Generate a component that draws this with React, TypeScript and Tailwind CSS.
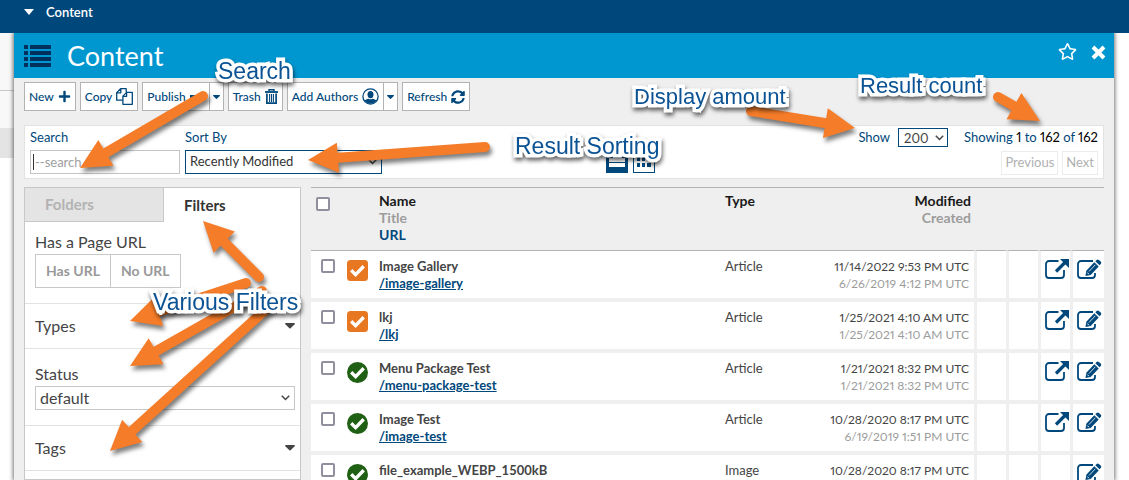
import React, { useState } from "react";
import { FaPlus, FaRegStar, FaSyncAlt } from "react-icons/fa";
import clsx from "clsx";

type Row = {
  name: string;
  url?: string;
  type: string;
  modified: string;
  created: string;
  status: "draft" | "live";
  external: boolean;
};

const rows: Row[] = [
  { name: "Image Gallery", url: "/image-gallery", type: "Article", modified: "11/14/2022 9:53 PM UTC", created: "6/26/2019 4:12 PM UTC", status: "draft", external: true },
  { name: "lkj", url: "/lkj", type: "Article", modified: "1/25/2021 4:10 AM UTC", created: "1/25/2021 4:10 AM UTC", status: "draft", external: true },
  { name: "Menu Package Test", url: "/menu-package-test", type: "Article", modified: "1/21/2021 8:32 PM UTC", created: "1/21/2021 8:32 PM UTC", status: "live", external: true },
  { name: "Image Test", url: "/image-test", type: "Article", modified: "10/28/2020 8:17 PM UTC", created: "6/19/2019 1:51 PM UTC", status: "live", external: true },
  { name: "file_example_WEBP_1500kB", type: "Image", modified: "10/28/2020 8:17 PM UTC", created: "", status: "live", external: false },
];

function ListIcon() {
  return (
    <svg width="27" height="22" viewBox="0 0 27 22" fill="#00305c" aria-hidden="true">
      {[0, 6, 12, 18].map((y) => (
        <g key={y}>
          <rect x="0" y={y} width="4" height="4" />
          <rect x="6" y={y} width="21" height="4" />
        </g>
      ))}
    </svg>
  );
}

function CaretDown({ width }: { width: number }) {
  return (
    <svg width={width} height={width / 2 + 0.5} viewBox="0 0 10 5.500" fill="currentColor" aria-hidden="true">
      <path d="M.8 0h8.400c.7 0 1 .7.5 1.200L5.600 5.200a.8.8 0 0 1-1.200 0L.3 1.200C-.2.7.1 0 .8 0Z" />
    </svg>
  );
}

function CopyIcon() {
  return (
    <svg width="17" height="17" viewBox="0 0 17 17" fill="none" stroke="currentColor" strokeWidth="1.300" strokeLinejoin="round" aria-hidden="true">
      <path d="M6.8 12.2H.7V4.6L4.6.7h5.6v3.6M4.8.9v3.9H.9" />
      <path d="M10.6 4.4h5.7v11.9H6.9V8.1l3.7-3.7v3.9H7.1" />
    </svg>
  );
}

function TrashIcon() {
  return (
    <svg width="13" height="15" viewBox="0 0 13 15" fill="none" stroke="currentColor" aria-hidden="true">
      <path d="M0 3h13" strokeWidth="1.8" />
      <path d="M4 2.6V.8h5v1.8" strokeWidth="1.4" />
      <path d="M1.9 4.5v9.6h9.2V4.5" strokeWidth="1.7" />
      <path d="M4.6 5v8M6.5 5v8M8.4 5v8" strokeWidth="1.1" />
    </svg>
  );
}

function UserIcon() {
  return (
    <svg width="17" height="17" viewBox="0 0 17 17" aria-hidden="true">
      <circle cx="8.5" cy="8.5" r="7.6" fill="none" stroke="currentColor" strokeWidth="1.3" />
      <ellipse cx="8.5" cy="6.6" rx="3" ry="3.7" fill="currentColor" />
      <path d="M2.400 12.600c.9-1.200 2.600-1.500 4.400-1.900.9.7 2.500.7 3.400 0 1.800.4 3.500.7 4.400 1.900A7.600 7.600 0 0 1 2.400 12.600Z" fill="currentColor" />
    </svg>
  );
}

function ExternalIcon() {
  return (
    <svg width="26" height="24" viewBox="0 0 26 24" aria-hidden="true">
      <path d="M14.500 4H5a3 3 0 0 0-3 3v11a3 3 0 0 0 3 3h12a3 3 0 0 0 3-3v-5" fill="none" stroke="currentColor" strokeWidth="1.800" />
      <path d="M12 14.500 21 5.500" stroke="currentColor" strokeWidth="3.200" />
      <path d="M16 2h9v9Z" fill="currentColor" />
    </svg>
  );
}

function EditIcon() {
  return (
    <svg width="26" height="24" viewBox="0 0 26 24" aria-hidden="true">
      <path d="M17 4H5a3 3 0 0 0-3 3v11a3 3 0 0 0 3 3h11a3 3 0 0 0 3-3v-2" fill="none" stroke="currentColor" strokeWidth="1.800" />
      <path d="M9.500 19 10.300 13.800 18.300 5.300 22.700 9.400 14.700 18Z" fill="currentColor" />
      <path d="M13 14.500 19.300 7.800" stroke="#fff" strokeWidth="0.800" />
      <path d="M11.300 15.600 12.900 17.200" stroke="#fff" strokeWidth="1" />
      <path d="M19.300 4.300 20.600 2.900c.7-.7 1.600-.7 2.300 0l1.800 1.700c.7.7.7 1.600.100 2.300L23.500 8.300Z" fill="currentColor" />
    </svg>
  );
}

function StatusIcon({ status }: { status: Row["status"] }) {
  return (
    <svg width="21" height="21" viewBox="0 0 21 21" role="img" aria-label={status === "draft" ? "Draft" : "Published"}>
      {status === "draft" ? <rect width="21" height="21" rx="3.500" fill="#e87722" /> : <circle cx="10.500" cy="10.500" r="10.500" fill="#206014" />}
      <path d="m4.200 10.300 4.400 4.300 8.100-8.300" fill="none" stroke="#fff" strokeWidth="3.400" />
    </svg>
  );
}

function Chevron({ className }: { className: string }) {
  return (
    <svg className={clsx("pointer-events-none absolute", className)} width="9" height="6" viewBox="0 0 9 6" fill="none" stroke="#444" strokeWidth="1.500" aria-hidden="true">
      <path d="m.8.8 3.700 3.700L8.200.8" />
    </svg>
  );
}

const toolBtn = "flex h-[29px] items-center gap-1 border border-[#b3b3b3] bg-white px-1 text-xs font-medium text-[#00487c]";

function ToolButton({ label, icon, menu }: { label: string; icon: React.ReactNode; menu?: boolean }) {
  return (
    <div className="flex">
      <button type="button" className={toolBtn}>
        {label}
        {icon}
      </button>
      {menu && (
        <button type="button" aria-label={`${label} options`} className="-ml-px flex h-[29px] w-[15px] items-center justify-center border border-[#b3b3b3] bg-white text-[#00487c]">
          <CaretDown width={7} />
        </button>
      )}
    </div>
  );
}

function PanelHeader() {
  return (
    <header className="flex h-[45px] shrink-0 items-center bg-[#0097d1] pr-2 pl-2.5 text-white">
      <ListIcon />
      <h1 className="ml-4 text-[27px] leading-8">Content</h1>
      <button type="button" aria-label="Favorite" className="ml-auto -mt-2">
        <FaRegStar size={19} />
      </button>
      <button type="button" aria-label="Close" className="ml-3.5 -mt-1.5">
        <svg width="15" height="15" viewBox="0 0 15 15" stroke="#fff" strokeWidth="4" aria-hidden="true">
          <path d="m2 2 11 11M13 2 2 13" />
        </svg>
      </button>
    </header>
  );
}

function QueryBar() {
  return (
    <section className="mt-3.5 flex h-[54px] border border-[#e2e2e2] bg-white pl-[5px] text-[13px] text-[#00487c]">
      <div className="flex w-[150px] flex-col">
        <label htmlFor="q" className="flex h-6 items-center">Search</label>
        <div className="relative">
          <input id="q" placeholder="--search" className="block h-6 w-full border border-[#c4c4c4] bg-white px-1 placeholder:text-[#a0a0a0]" />
          <span className="absolute top-1 left-[3px] h-4 w-px bg-[#333]" aria-hidden="true" />
        </div>
      </div>
      <div className="ml-[5px] flex w-[197px] flex-col">
        <label htmlFor="sort" className="flex h-6 items-center">Sort By</label>
        <div className="relative">
          <select id="sort" className="block h-6 w-full appearance-none border border-[#00487c] bg-white px-1 text-[#333]">
            <option>Recently Modified</option>
          </select>
          <Chevron className="top-[9px] right-[5px]" />
        </div>
      </div>
      <div className="mx-auto flex items-end gap-[5px] pb-[5px] pl-5">
        <button type="button" aria-label="List view" className="flex h-[22px] w-[22px] flex-col justify-end gap-px bg-[#00487c] px-[3px] pb-1.5">
          <span className="h-1 w-full bg-white" />
          <span className="h-1 w-full bg-white" />
          <span className="h-1 w-full bg-white" />
        </button>
        <button type="button" aria-label="Grid view" className="grid h-[22px] w-[22px] grid-cols-3 content-end gap-0.5 border border-[#00487c] px-[3px] pb-[5px]">
          {[0, 1, 2, 3, 4, 5].map((i) => (
            <span key={i} className="h-1 bg-[#00487c]" />
          ))}
        </button>
      </div>
      <div className="flex flex-col items-end pr-[5px] proportional-nums">
        <div className="flex items-center pt-0.5">
          <label htmlFor="show">Show</label>
          <div className="relative ml-2">
            <select id="show" className="block h-[19px] w-[50px] appearance-none border border-[#00487c] bg-white px-[5px] text-[13px] leading-4 text-[#444]">
              <option>200</option>
            </select>
            <Chevron className="top-[7px] right-1" />
          </div>
          <p className="ml-4">
            Showing <span className="text-black">1</span> to <span className="text-black">162</span> of <span className="text-black">162</span>
          </p>
        </div>
        <div className="mt-[3px] flex gap-1 text-[#b0b0b0]">
          <button type="button" className="h-6 border border-[#ececec] px-[3px]">Previous</button>
          <button type="button" className="h-6 border border-[#ececec] px-[3px]">Next</button>
        </div>
      </div>
    </section>
  );
}

function Sidebar() {
  const [tab, setTab] = useState("Filters");
  return (
    <aside className="w-[277px] shrink-0 border border-[#c8c8c8] bg-white text-base text-[#444]">
      <div className="grid h-[34px] grid-cols-[139px_1fr] text-[15px] font-bold">
        {["Folders", "Filters"].map((t) => (
          <button
            key={t}
            type="button"
            onClick={() => setTab(t)}
            className={clsx("pl-5 text-left", tab === t ? "text-[#333]" : "border-r border-b border-[#c8c8c8] bg-[#e4e4e4] text-[#b3b3b3]")}
          >
            {t}
          </button>
        ))}
      </div>
      <section className="h-[82px] border-b border-[#e2e2e2] px-2.5 pt-2">
        <h2 className="leading-6">Has a Page URL</h2>
        <div className="flex text-sm font-bold text-[#999]">
          <button type="button" className="h-[34px] border border-[#c8c8c8] px-2.5">Has URL</button>
          <button type="button" className="-ml-px h-[34px] border border-[#c8c8c8] px-2.5">No URL</button>
        </div>
      </section>
      <button type="button" className="flex h-[45px] w-full items-center justify-between border-b border-[#e2e2e2] pr-[5px] pl-2.5">
        Types <CaretDown width={10} />
      </button>
      <section className="h-[77px] border-b border-[#e2e2e2] pr-[5px] pl-2.5 pt-[13px]">
        <label htmlFor="status" className="block leading-6">Status</label>
        <div className="relative">
          <select id="status" className="block h-6 w-full appearance-none border border-[#c8c8c8] bg-white px-1 leading-5">
            <option>default</option>
          </select>
          <Chevron className="top-[9px] right-[5px]" />
        </div>
      </section>
      <button type="button" className="flex h-[45px] w-full items-center justify-between border-b border-[#e2e2e2] pr-[5px] pl-2.5">
        Tags <CaretDown width={10} />
      </button>
    </aside>
  );
}

const box = "block size-3.5 appearance-none rounded-xs border-2 border-[#8f8f9d] bg-white";
const cell = "h-[51px] border-b-4 border-b-[#efefef] bg-white p-0 align-top group-first:h-[52px] group-first:border-t group-first:border-t-[#b3b3b3]";
const action = "border-l-3 border-l-[#efefef] pt-1.5 pl-[3px] text-[#00487c]";
const head = "h-[63px] border-t border-[#b3b3b3] p-0 pt-1 align-top text-sm font-bold leading-[17px] text-[#1a1a1a]";

function ResultsTable() {
  return (
    <table className="min-w-0 flex-1 table-fixed border-separate border-spacing-0 self-start text-[13px] text-[#444]">
      <colgroup>
        <col className="w-[34px]" />
        <col className="w-[34px]" />
        <col />
        <col className="w-[90px]" />
        <col className="w-[159px]" />
        <col className="w-8" />
        <col className="w-8" />
        <col className="w-8" />
        <col className="w-[34px]" />
      </colgroup>
      <thead>
        <tr>
          <th className={head}>
            <input type="checkbox" aria-label="Select all" className={clsx(box, "mt-[5px] ml-[5px]")} />
          </th>
          <th className={head} />
          <th className={clsx(head, "text-left")}>
            Name
            <div className="text-[#9c9c9c]">Title</div>
            <div className="text-[#00487c]">URL</div>
          </th>
          <th className={clsx(head, "text-left")}>Type</th>
          <th className={clsx(head, "pr-[3px] text-right")}>
            Modified
            <div className="text-[#9c9c9c]">Created</div>
          </th>
          <th className={head} />
          <th className={head} />
          <th className={head} />
          <th className={head} />
        </tr>
      </thead>
      <tbody>
        {rows.map((r) => (
          <tr key={r.name} className="group">
            <td className={cell}>
              <input type="checkbox" aria-label={`Select ${r.name}`} className={clsx(box, "mt-2 ml-2.5")} />
            </td>
            <td className={cell}>
              <div className="pt-[9px] pl-0.5">
                <StatusIcon status={r.status} />
              </div>
            </td>
            <td className={clsx(cell, "pt-[7px] font-bold leading-[17px]")}>
              {r.name}
              {r.url && (
                <a href={r.url} className="block w-fit text-[#00487c] underline">
                  {r.url}
                </a>
              )}
            </td>
            <td className={clsx(cell, "pt-[7px] leading-[17px]")}>{r.type}</td>
            <td className={clsx(cell, "pt-[7px] pr-[5px] text-right text-xs leading-[17px] whitespace-nowrap proportional-nums")}>
              {r.modified}
              <div className="text-[#9c9c9c]">{r.created}</div>
            </td>
            <td className={clsx(cell, action)} />
            <td className={clsx(cell, action)} />
            <td className={clsx(cell, action)}>
              {r.external && (
                <a href={r.url} aria-label={`Open ${r.name}`} className="block">
                  <ExternalIcon />
                </a>
              )}
            </td>
            <td className={clsx(cell, action)}>
              <a href="#edit" aria-label={`Edit ${r.name}`} className="block">
                <EditIcon />
              </a>
            </td>
          </tr>
        ))}
      </tbody>
    </table>
  );
}

type Arrow = { from: [number, number]; to: [number, number] };

const arrows: Arrow[] = [
  { from: [203, 96], to: [80, 168] },
  { from: [485, 147], to: [308, 160] },
  { from: [751, 111], to: [855, 128] },
  { from: [998, 97], to: [1040, 121] },
  { from: [259, 277], to: [203, 221] },
  { from: [246, 283], to: [130, 321] },
  { from: [262, 291], to: [130, 366] },
  { from: [274, 302], to: [110, 451] },
];

function ArrowShape({ from, to }: Arrow) {
  const dx = to[0] - from[0];
  const dy = to[1] - from[1];
  const length = Math.hypot(dx, dy);
  const angle = (Math.atan2(dy, dx) * 180) / Math.PI;
  return (
    <g transform={`translate(${from[0]} ${from[1]}) rotate(${angle})`}>
      <path d={`M0 0H${length - 20}`} stroke="#f57c28" strokeWidth="10" strokeLinecap="round" />
      <path d={`M${length} 0l-30 -15v30Z`} fill="#f57c28" />
    </g>
  );
}

const labels = [
  { text: "Search", place: "left-[218px] top-[59px] text-[23px]" },
  { text: "Display amount", place: "left-[634px] top-[85px] text-[22px]" },
  { text: "Result count", place: "left-[860px] top-[74px] text-[22px]" },
  { text: "Result Sorting", place: "left-[515px] top-[134px] text-[23px]" },
  { text: "Various Filters", place: "left-[153px] top-[290px] text-[23px]" },
];

function Annotations() {
  return (
    <div className="pointer-events-none absolute inset-0">
      <svg className="absolute top-0 left-0 drop-shadow-[2px_4px_2px_rgba(0,0,0,0.5)]" width="1129" height="480" aria-hidden="true">
        {arrows.map((a) => (
          <ArrowShape key={a.to.join()} {...a} />
        ))}
      </svg>
      {labels.map((l) => (
        <span
          key={l.text}
          className={clsx(
            "absolute whitespace-nowrap font-['Liberation_Sans',sans-serif] leading-6 text-[#0b5394] drop-shadow-[1px_3px_2px_rgba(0,0,0,0.6)] [-webkit-text-stroke:7px_white] [paint-order:stroke_fill] [stroke-linejoin:round]",
            l.place,
          )}
        >
          {l.text}
        </span>
      ))}
    </div>
  );
}

export default function App() {
  return (
    <div className="relative flex h-screen flex-col overflow-hidden bg-white font-['Lato',sans-serif]">
      <nav className="flex h-[33px] shrink-0 items-start bg-[#00487c] pt-1 pl-6 text-white">
        <button type="button" className="flex items-center gap-3 text-[13px] font-semibold leading-4">
          <svg width="10" height="6" viewBox="0 0 10 6" fill="#fff" aria-hidden="true">
            <path d="M0 0h10L5 6Z" />
          </svg>
          Content
        </button>
      </nav>
      <div className="flex min-h-0 flex-1">
        <div className="w-3.5 shrink-0">
          <div className="h-[58px] border-b border-[#c8c8c8] bg-[#f8f8f8]" />
          <div className="h-[37px] bg-[#f8f8f8]" />
          <div className="h-[30px] bg-[#e4e4e4]" />
        </div>
        <main className="mr-[15px] flex min-w-0 flex-1 flex-col bg-[#efefef] shadow-[0_0_4px_1px_rgba(0,0,0,0.55)] [clip-path:inset(0_-8px)]">
          <PanelHeader />
          <div className="px-2.5 pt-1">
            <div className="flex gap-1">
              <ToolButton label="New" icon={<FaPlus size={13} />} />
              <ToolButton label="Copy" icon={<CopyIcon />} />
              <ToolButton label="Publish" icon={<span className="h-[3px] w-[15px] bg-current" />} menu />
              <ToolButton label="Trash" icon={<TrashIcon />} />
              <ToolButton label="Add Authors" icon={<UserIcon />} menu />
              <ToolButton label="Refresh" icon={<FaSyncAlt size={14} />} />
            </div>
            <QueryBar />
          </div>
          <div className="flex min-h-0 flex-1 gap-2.5 overflow-hidden px-2.5 pt-2">
            <Sidebar />
            <ResultsTable />
          </div>
        </main>
      </div>
      <Annotations />
    </div>
  );
}
